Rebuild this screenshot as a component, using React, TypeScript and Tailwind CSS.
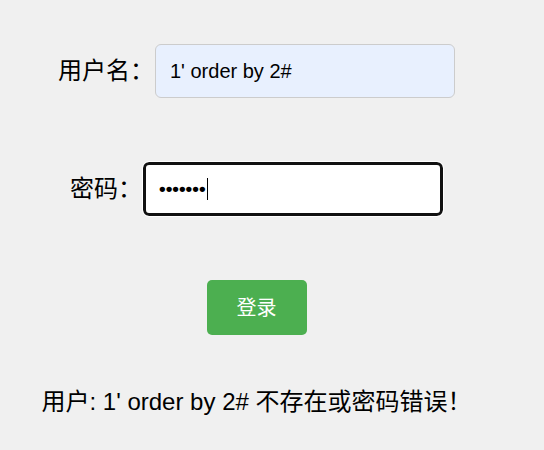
export default function App() {
  const font = { fontFamily: '"Liberation Sans", "Noto Sans CJK SC", sans-serif' };

  return (
    <div className="min-h-[450px] w-[544px] bg-[#f0f0f0] text-black" style={font}>
      {/* 表单 */}
      <div className="flex w-[513px] flex-col items-center pt-[44px]">
        {/* 用户名 */}
        <div className="flex h-[54px] items-center">
          <label className="w-[97px] text-[24px] leading-none">用户名：</label>
          <div className="flex h-[54px] w-[300px] items-center rounded-md border border-[#cccccc] bg-[#e8f0fe] px-[14px] text-[20px]">
            1' order by 2#
          </div>
        </div>

        {/* 密码 */}
        <div className="mt-[64px] flex h-[54px] items-center">
          <label className="w-[73px] text-[24px] leading-none">密码：</label>
          <div className="flex h-[54px] w-[300px] items-center rounded-md border-[3px] border-[#111111] bg-white px-[13px] text-[19px] font-bold outline outline-1 outline-white">
            <span>•••••••</span>
            <span className="ml-px h-[22px] w-px bg-black"></span>
          </div>
        </div>

        {/* 登录按钮 */}
        <button className="mt-[64px] flex h-[55px] w-[100px] items-center justify-center rounded-[5px] bg-[#4caf50] text-[20px] text-white">
          登录
        </button>
      </div>

      {/* 提示信息 */}
      <p className="mt-[49px] w-[513px] text-center text-[24px] leading-[36px]">
        用户: 1' order by 2# 不存在或密码错误！
      </p>
    </div>
  );
}
